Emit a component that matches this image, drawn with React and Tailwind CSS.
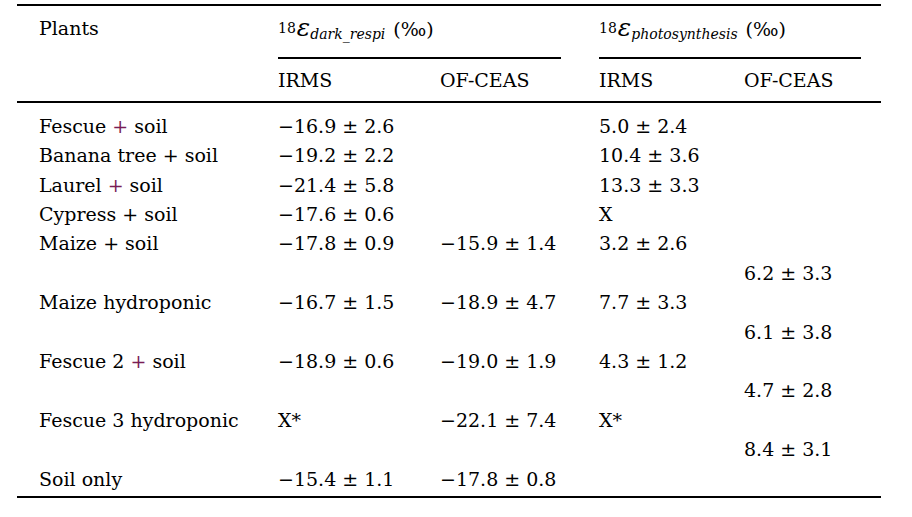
const serif = { fontFamily: '"DejaVu Serif", "Liberation Serif", serif' }

const Plus = ({ purple }) => (
  <span className={purple ? 'text-[#7a1d55]' : ''}>+</span>
)

const rows = [
  [<>Fescue <Plus purple /> soil</>, '−16.9 ± 2.6', '', '5.0 ± 2.4', ''],
  [<>Banana tree <Plus /> soil</>, '−19.2 ± 2.2', '', '10.4 ± 3.6', ''],
  [<>Laurel <Plus purple /> soil</>, '−21.4 ± 5.8', '', '13.3 ± 3.3', ''],
  [<>Cypress <Plus /> soil</>, '−17.6 ± 0.6', '', 'X', ''],
  [<>Maize <Plus /> soil</>, '−17.8 ± 0.9', '−15.9 ± 1.4', '3.2 ± 2.6', ''],
  ['', '', '', '', '6.2 ± 3.3'],
  ['Maize hydroponic', '−16.7 ± 1.5', '−18.9 ± 4.7', '7.7 ± 3.3', ''],
  ['', '', '', '', '6.1 ± 3.8'],
  [<>Fescue 2 <Plus purple /> soil</>, '−18.9 ± 0.6', '−19.0 ± 1.9', '4.3 ± 1.2', ''],
  ['', '', '', '', '4.7 ± 2.8'],
  ['Fescue 3 hydroponic', 'X*', '−22.1 ± 7.4', 'X*', ''],
  ['', '', '', '', '8.4 ± 3.1'],
  ['Soil only', '−15.4 ± 1.1', '−17.8 ± 0.8', '', ''],
]

const cols = 'grid grid-cols-[239px_162px_159px_145px_1fr]'

function Epsilon({ sub }) {
  return (
    <span className="whitespace-nowrap">
      <sup className="text-[14px] relative -top-[3px]">18</sup>
      <span className="italic text-[25px] ml-[1px]">ε</span>
      <sub className="italic text-[14px] relative top-[3px]">{sub}</sub>
      <span className="ml-[8px]">(‰)</span>
    </span>
  )
}

export default function App() {
  return (
    <div className="w-[912px] h-[517px] bg-white text-black text-[19px] leading-[24px]" style={serif}>
      <div className="ml-[17px] mt-[4px] w-[864px] border-t-2 border-black">
        {/* header row 1 */}
        <div className={`${cols} pl-[22px] h-[51px] pt-[10px]`}>
          <div>Plants</div>
          <div className="col-span-2"><Epsilon sub="dark_respi" /></div>
          <div className="col-span-2"><Epsilon sub="photosynthesis" /></div>
        </div>
        <div className={`${cols} pl-[22px]`}>
          <div />
          <div className="col-span-2 mr-[38px] h-[2px] bg-black" />
          <div className="col-span-2 mr-[20px] h-[2px] bg-black" />
        </div>
        {/* header row 2 */}
        <div className={`${cols} pl-[22px] h-[44px] pt-[9px] border-b-2 border-black`}>
          <div />
          <div>IRMS</div>
          <div>OF-CEAS</div>
          <div>IRMS</div>
          <div>OF-CEAS</div>
        </div>
        {/* body */}
        <div className="pt-[8px] pb-[3px] border-b-2 border-black">
          {rows.map((r, i) => (
            <div key={i} className={`${cols} pl-[22px] h-[29.42px] items-center`}>
              {r.map((c, j) => (
                <div key={j} className="whitespace-nowrap">{c}</div>
              ))}
            </div>
          ))}
        </div>
      </div>
    </div>
  )
}
